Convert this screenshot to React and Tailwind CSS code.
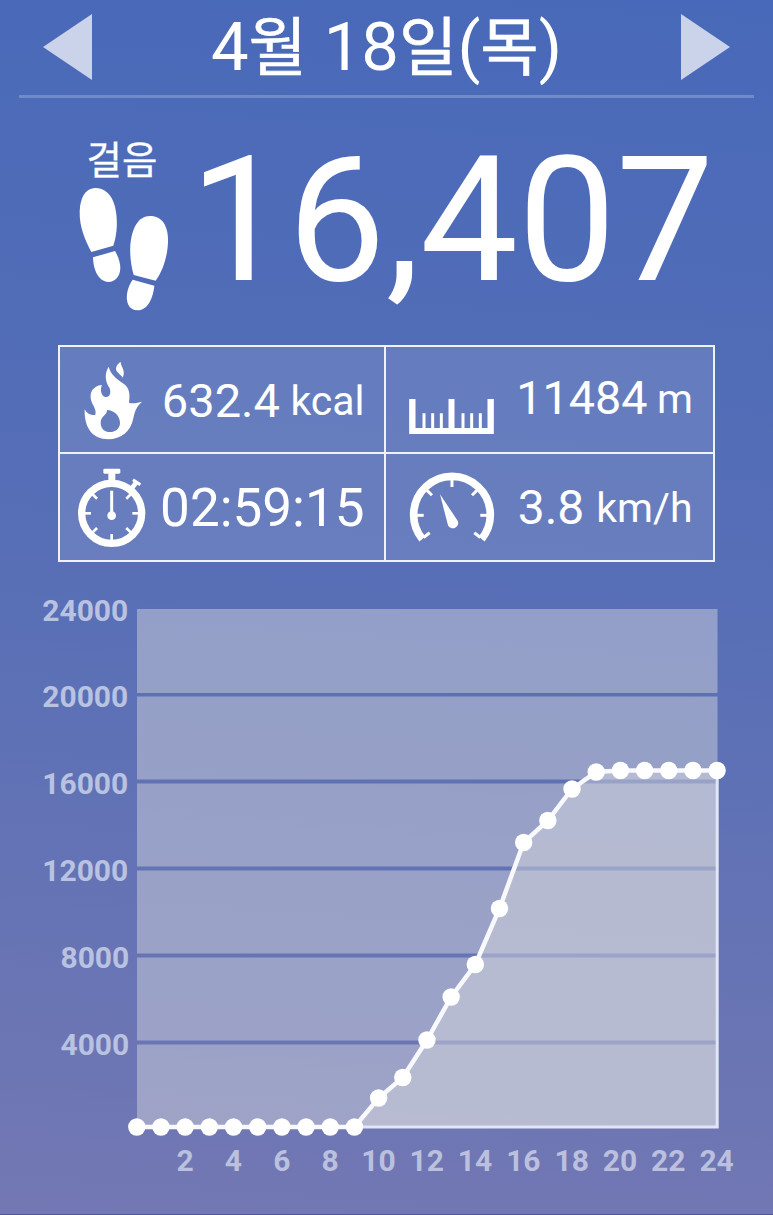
const totals = [1127, 1127, 1127, 1127, 1127, 1127, 1127, 1127, 1127, 1127, 1098, 1077.5, 1040, 997, 964.5, 908.5, 842.5, 820.5, 789, 772, 770.5, 770.5, 770.5, 770.5, 770.5]
const points = totals.map((y, i) => [136.8 + i * 24.18, y])
const line = points.map((p) => p.join(',')).join(' ')
const area = `354.3,1127 ${points.slice(10).map((p) => p.join(',')).join(' ')} 716.9,1127`
const bands = [
  [609, 84],
  [696.5, 83],
  [783.5, 83],
  [870.5, 83],
  [957.5, 83],
  [1044.5, 83.5],
]

function Feet() {
  return (
    <svg viewBox="57 171 270 372" className="h-[124px] w-[90px] fill-white">
      <path d="M94 366L160 347C172 310 174 270 165 230C155 190 130 173 104 174C75 176 60 205 59 245C58 290 75 330 94 366Z" />
      <path d="M99 382L165 363C175 380 181 398 181 415C180 440 165 456 145 456C115 455 100 420 99 382Z" />
      <path d="M221 435L287 452C310 420 323 375 324 335C325 290 308 258 270 258C235 258 215 295 211 345C209 380 214 410 221 435Z" />
      <path d="M218 449L283 467C280 500 265 541 233 541C205 541 198 515 201 492C203 475 210 460 218 449Z" />
    </svg>
  )
}

function Flame() {
  return (
    <svg viewBox="88 60 177 242" className="ml-[24px] mt-[13px] h-[80.7px] w-[59px] shrink-0 fill-white">
      <path
        fillRule="evenodd"
        d="M162 80C168 105 190 120 208 132C226 146 226 165 223 188C235 192 250 188 262 185C245 200 240 215 236 235C228 275 200 298 160 298C115 298 88 265 90 208C97 222 110 228 122 224C128 205 105 190 108 165C109 148 125 135 142 135C135 150 140 168 152 171C165 173 170 160 165 145C150 122 150 100 162 80ZM157 210C158 225 138 228 138 248C138 266 150 276 166 276C184 276 196 264 196 248C196 230 180 210 157 210Z"
      />
      <path d="M198 65C197 80 215 90 204 113C200 103 182 98 184 84C186 74 192 70 198 65Z" />
    </svg>
  )
}

function Stopwatch() {
  return (
    <svg viewBox="66 384 207 240" className="ml-[17px] mt-[14px] h-[80px] w-[69px] shrink-0 fill-white">
      <circle cx="170" cy="520" r="90" fill="none" stroke="white" strokeWidth="22" />
      <rect x="145" y="386" width="51" height="15" rx="4" />
      <rect x="160" y="396" width="21" height="30" />
      <path d="M230 446L243 428" stroke="white" strokeWidth="14" />
      <path d="M234 419L256 434" stroke="white" strokeWidth="9" />
      <path d="M170 452V525" stroke="white" strokeWidth="9" />
      <circle cx="170" cy="527" r="13" />
      {[45, 90, 135, 180, 225, 270, 315].map((a) => (
        <path key={a} d="M170 438V458" stroke="white" strokeWidth="8" transform={`rotate(${a} 170 520)`} />
      ))}
    </svg>
  )
}

function Ruler() {
  return (
    <svg viewBox="88 177 254 105" className="ml-[23px] mt-[52px] h-[35px] w-[85px] shrink-0 fill-white">
      <path d="M88 177H107V264H128V220H137V264H154V220H163V264H180V220H189V264H206V177H224V264H245V220H254V264H271V220H280V264H297V220H306V264H323V177H342V282H88Z" />
    </svg>
  )
}

function Gauge() {
  return (
    <svg viewBox="86 396 259 216" className="ml-[22.5px] mt-[18px] h-[72px] w-[86.3px] shrink-0 fill-white">
      <path d="M126 597A115 115 0 1 1 304 597" fill="none" stroke="white" strokeWidth="23" />
      {[-128, -90, -45, 0, 45, 90, 128].map((a) => (
        <path key={a} d="M215 418V441" stroke="white" strokeWidth="9" transform={`rotate(${a} 215 526)`} />
      ))}
      <path d="M179 463L232 542A16 16 0 0 1 203 556Z" strokeLinejoin="round" />
    </svg>
  )
}

export default function App() {
  return (
    <main className="flex h-[1215px] w-[773px] flex-col overflow-hidden border-b border-[#50579b] bg-linear-[184deg] from-[#4869b9] via-[#586fb6] to-[#7378b3] font-['Roboto','Noto_Sans_CJK_KR',sans-serif] text-white">
      <header className="mx-[19px] flex h-[98px] shrink-0 justify-between border-b-[3px] border-[#718acb] px-[24px] pt-[14px]">
        <svg viewBox="0 0 49 66" className="h-[66px] w-[49px] fill-[#cad3ea]">
          <path d="M0 33L49 0V66Z" />
        </svg>
        <h1 className="-mt-[14px] h-[94px] whitespace-nowrap text-[67px] leading-[94px]">
          4<span className="text-[63.5px] [-webkit-text-stroke:0.6px_white]">월</span> 18
          <span className="text-[63.5px] [-webkit-text-stroke:0.6px_white]">일</span>(
          <span className="text-[63.5px] [-webkit-text-stroke:0.6px_white]">목</span>)
        </h1>
        <svg viewBox="0 0 49 66" className="h-[66px] w-[49px] fill-[#cad3ea]">
          <path d="M49 33L0 0V66Z" />
        </svg>
      </header>

      <section className="flex h-[247px] shrink-0 pl-[79px]">
        <div className="flex w-[90px] flex-col items-center pt-[39px]">
          <span className="h-[50px] whitespace-nowrap pr-1 pt-px text-[38.5px] leading-[46px] [-webkit-text-stroke:0.3px_white]">걸음</span>
          <Feet />
        </div>
        <strong className="ml-[20.5px] mt-[21px] whitespace-nowrap text-[174.5px] font-normal leading-[204px]">16,407</strong>
      </section>

      <section className="ml-[58px] grid h-[217px] w-[657px] shrink-0 grid-cols-[326px_327px] grid-rows-[107px_106px] border-2 border-white/90 bg-white/11">
        <div className="flex border-b-2 border-r-2 border-white/90">
          <Flame />
          <p className="ml-auto mr-[19.5px] flex items-baseline gap-[10.5px] whitespace-nowrap leading-[107px]">
            <span className="text-[47px]">632.4</span>
            <span className="-translate-y-0.5 text-[41px]">kcal</span>
          </p>
        </div>
        <div className="flex border-b-2 border-white/90">
          <Ruler />
          <p className="ml-auto mr-[20px] flex items-baseline gap-[9.5px] whitespace-nowrap leading-[103px]">
            <span className="text-[46.7px]">11484</span>
            <span className="-translate-y-px text-[41px]">m</span>
          </p>
        </div>
        <div className="flex border-r-2 border-white/90">
          <Stopwatch />
          <p className="ml-auto mr-[19.5px] whitespace-nowrap text-[53px] leading-[109px]">02:59:15</p>
        </div>
        <div className="flex">
          <Gauge />
          <p className="ml-auto mr-[20.5px] flex items-baseline gap-[12px] whitespace-nowrap leading-[107px]">
            <span className="text-[48px]">3.8</span>
            <span className="-translate-y-0.5 text-[41px]">km/h</span>
          </p>
        </div>
      </section>

      <svg viewBox="0 562 773 652" className="h-[652px] w-[773px] shrink-0">
        <g fill="rgb(205,207,218)" fillOpacity="0.5">
          {bands.map(([y, h]) => (
            <rect key={y} x="137" y={y} width="580.5" height={h} />
          ))}
        </g>
        <polygon points={area} className="fill-[#d2d4dc]/50" />
        <path d="M354 1127H717.2V771" fill="none" stroke="#e2e6f4" strokeWidth="3" />
        <polyline points={line} fill="none" stroke="#f8f9fd" strokeWidth="4.5" />
        {points.map(([x, y]) => (
          <circle key={x} cx={x} cy={y} r="8.7" fill="white" />
        ))}
        <g fill="#b9c2e1" className="text-[30px] font-bold" textAnchor="end">
          {[24000, 20000, 16000, 12000, 8000, 4000].map((v, i) => (
            <text key={v} x={i < 4 ? 128.3 : 129.3} y={620.5 + i * 86.8}>{v}</text>
          ))}
        </g>
        <g fill="#bbc0de" className="text-[30px] font-bold" textAnchor="middle">
          {[2, 4, 6, 8, 10, 12, 14, 16, 18, 20, 22, 24].map((v) => (
            <text key={v} x={136.8 + v * 24.16} y="1170.7">{v}</text>
          ))}
        </g>
      </svg>
    </main>
  )
}
